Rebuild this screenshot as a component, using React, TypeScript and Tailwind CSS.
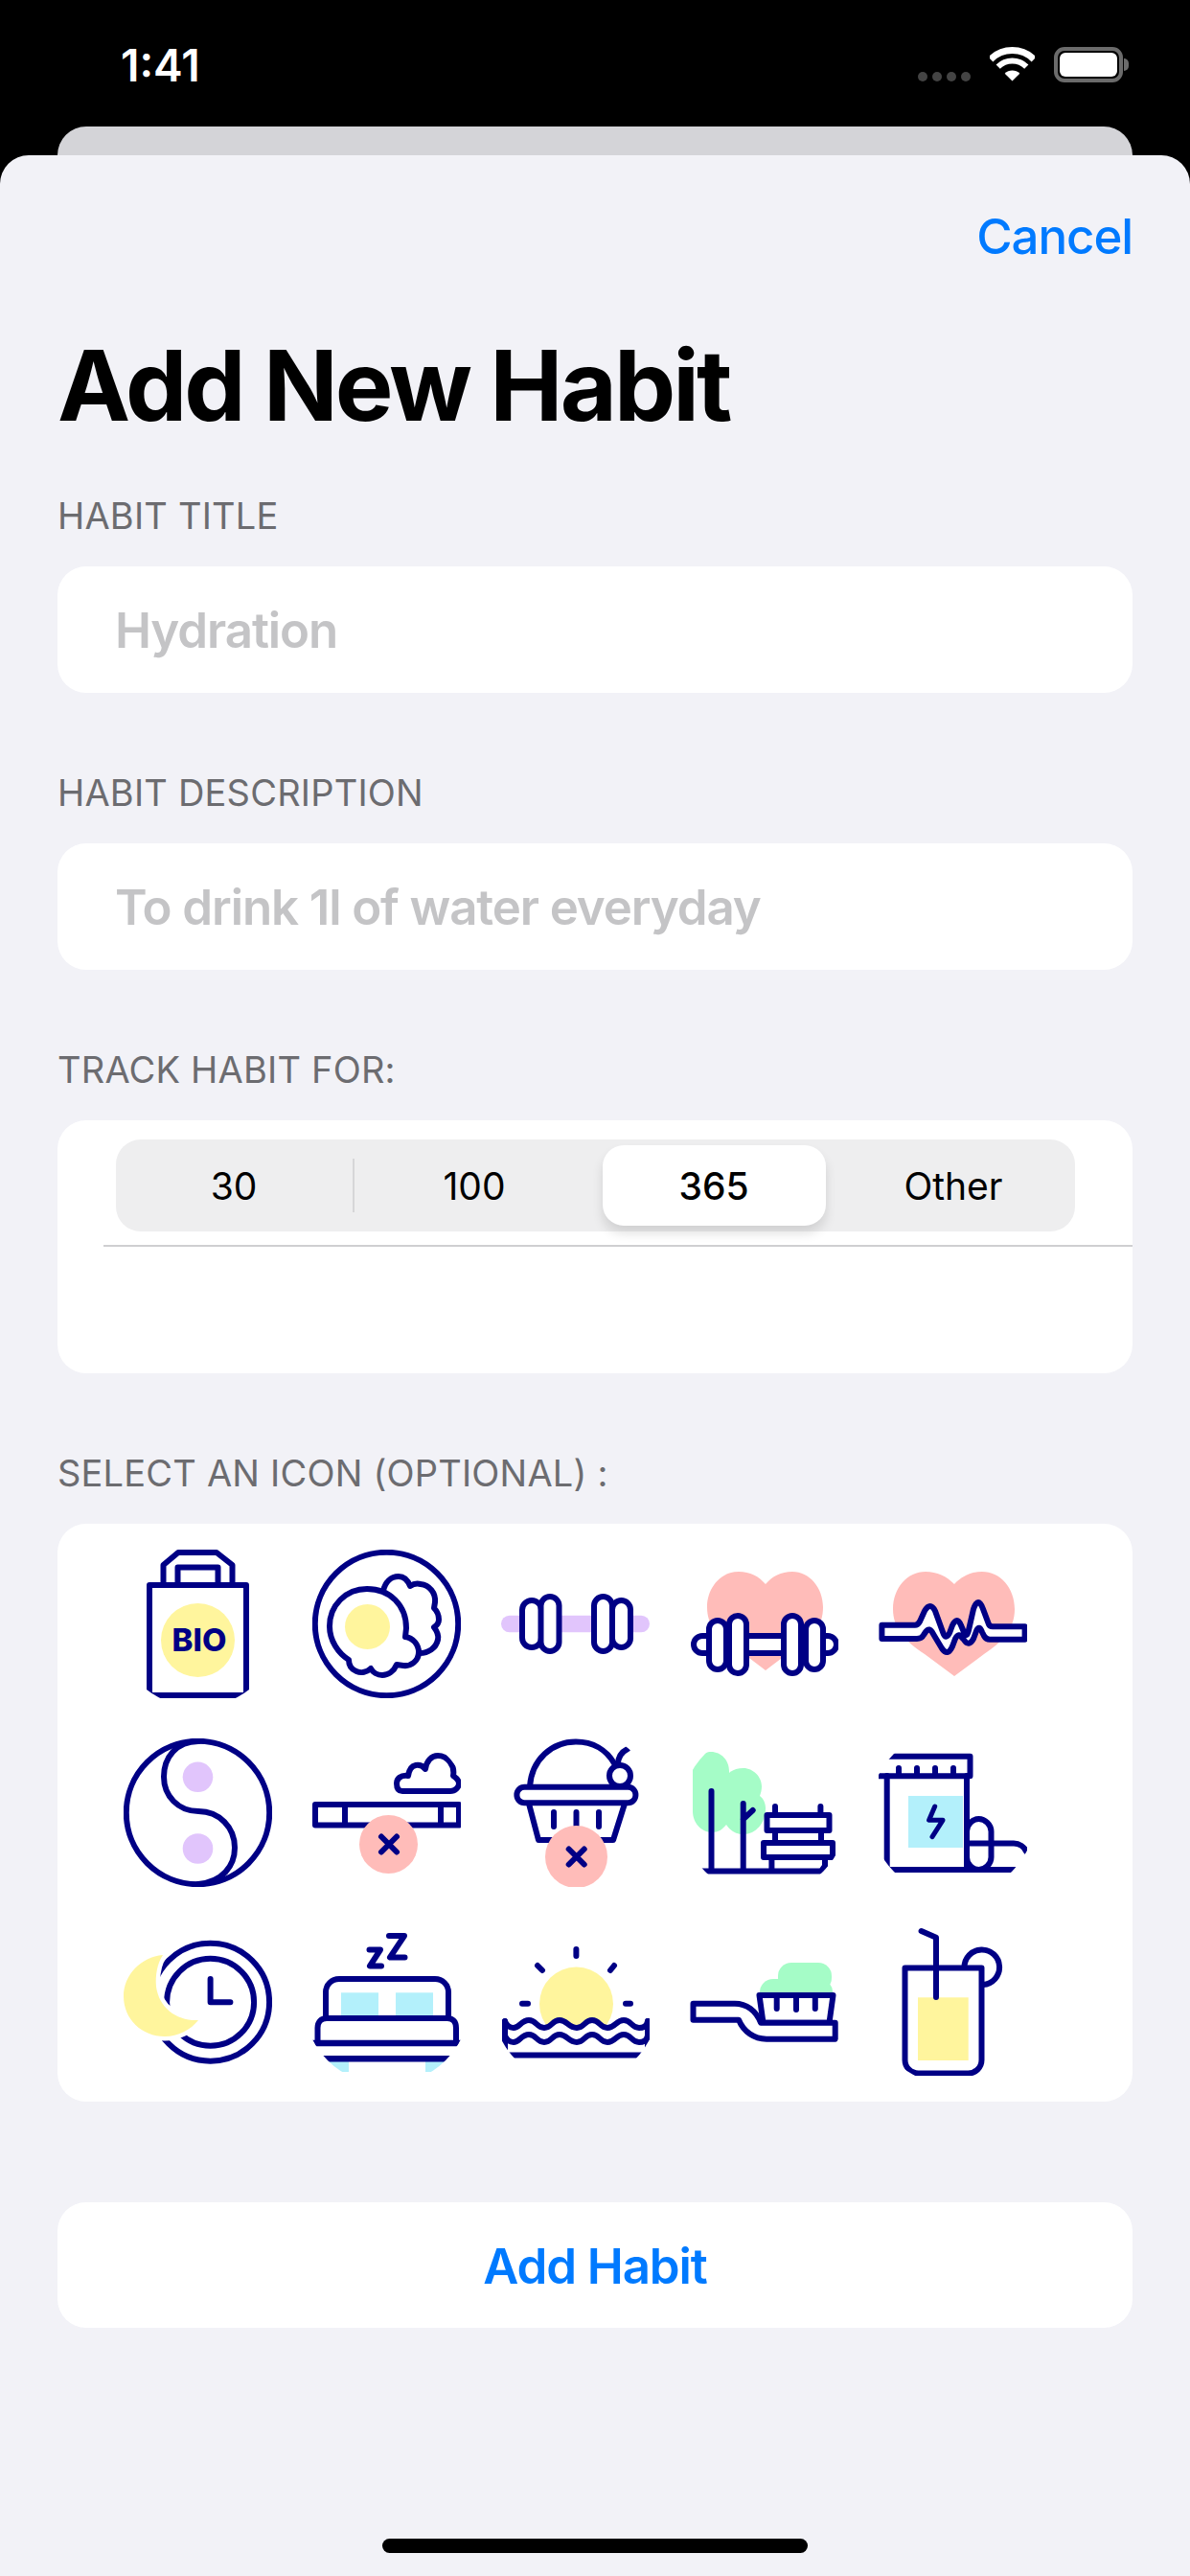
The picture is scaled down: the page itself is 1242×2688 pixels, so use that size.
const NAVY = '#000085';
const YELLOW = '#fff59d';
const LILAC = '#e1c5fc';
const PINK = '#ffbcb9';
const GREEN = '#a5fcc7';
const CYAN = '#b3f0fb';

function Icon({ children }: { children: React.ReactNode }) {
  return (
    <svg
      viewBox="0 0 155 155"
      fill="none"
      stroke={NAVY}
      strokeWidth={6}
      strokeLinecap="round"
      strokeLinejoin="round"
      className="h-[155px] w-[155px] [clip-path:circle(87px)]"
    >
      {children}
    </svg>
  );
}

function Bag() {
  return (
    <Icon>
      <path d="M41.5 34V16L57 3H97L113.5 16V34" />
      <path d="M56.5 34V18.5H98.5V34" />
      <rect x={27} y={37} width={101} height={115} />
      <circle cx={77.5} cy={94.5} r={38.5} fill={YELLOW} stroke="none" />
      <text x={79} y={106} textAnchor="middle" fontFamily="Inter, sans-serif" fontWeight={800} fontSize={33} fill={NAVY} stroke="none">
        BIO
      </text>
    </Icon>
  );
}

function Plate() {
  return (
    <Icon>
      <circle cx={77.5} cy={77.5} r={74.7} />
      <g transform="translate(-1 0)">
        <path d="M75 43C77 34 83 28 91 28C97 28 101 33 103 38C106 36 110 35 114 36C123 37 130 45 129 55L128 61C131 64 133 69 133 73C133 76 131 79 128 81C131 85 133 90 132 94C130 103 122 108 113 108" />
        <path d="M58 41C82 41 99 58 99 82L98 91C106 92 112 99 112 107C112 116 104 122 96 121L89 120C86 127 80 131 74 131C69 131 64 128 62 124C58 128 52 129 47 127C42 125 39 121 39 115C28 108 19 95 19 80C19 58 36 41 58 41Z" />
        <circle cx={58.5} cy={80.5} r={23.5} fill={YELLOW} stroke="none" />
      </g>
    </Icon>
  );
}

function Dumbbell() {
  return (
    <Icon>
      <rect x={0} y={68.7} width={155} height={17.6} rx={8.8} fill={LILAC} stroke="none" />
      <rect x={22} y={53} width={20} height={49} rx={10} fill="#fff" />
      <rect x={41.5} y={49} width={19} height={57} rx={9.5} fill="#fff" />
      <rect x={97} y={49} width={19} height={57} rx={9.5} fill="#fff" />
      <rect x={116} y={53} width={19} height={49} rx={9.5} fill="#fff" />
    </Icon>
  );
}

function HeartDumbbell() {
  return (
    <Icon>
      <path
        d="M79 36C72 28 63 23 51 23C32 23 18 40 18 60C18 80 30 92 50 104L79 126L108 104C128 92 139 80 139 60C139 40 125 23 107 23C95 23 86 28 79 36Z"
        fill={PINK}
        stroke="none"
      />
      <rect x={58} y={90} width={42} height={18} fill="#fff" />
      <path d="M20 90H13A9 9 0 0 0 13 108H20" fill="#fff" />
      <path d="M138 90H144A9 9 0 0 1 144 108H138" fill="#fff" />
      <rect x={20} y={74} width={18} height={51} rx={9} fill="#fff" />
      <rect x={121} y={74} width={18} height={51} rx={9} fill="#fff" />
      <rect x={41} y={69} width={18} height={60} rx={9} fill="#fff" />
      <rect x={98} y={69} width={18} height={60} rx={9} fill="#fff" />
    </Icon>
  );
}

function HeartPulse() {
  return (
    <Icon>
      <path
        d="M79 36C71 28 61 23 49 23C30 23 15 40 15 62C15 82 28 96 48 109L79 132L110 109C130 96 142 82 142 62C142 40 127 23 108 23C96 23 87 28 79 36Z"
        fill={PINK}
        stroke="none"
      />
      <path
        d="M3.4 78.7H38Q41 78.7 43 75L48 64Q54 54 59 64L67 86Q70 95 74 87L77 79Q82 69 86 79L89 86Q92 93 94 84L99 62Q104 48 109 62L115 78Q116 80.3 119 80.3H152.6V93.7H116Q112 93.7 110 90L108 86Q105 78 102 85L99 93Q94 102 89 94L87 92Q84 86 80 93L77 101Q72 112 66 103L57 88Q53 80 49 86L47 89Q45 93 40 93H3.4Z"
        fill="#fff"
      />
    </Icon>
  );
}

function YinYang() {
  return (
    <Icon>
      <circle cx={77.5} cy={77.5} r={74.7} />
      <path d="M78 3C55 3 42 20 42 40C42 60 57 76 78 76C100 76 116 93 116 114C116 133 103 150 78 152" />
      <circle cx={77.5} cy={40.3} r={15.8} fill={LILAC} stroke="none" />
      <circle cx={77.5} cy={115} r={15.8} fill={LILAC} stroke="none" />
    </Icon>
  );
}

function NoSmoke() {
  return (
    <Icon>
      <path d="M94 55H144C149 55 153 51 153 47C153 44 150 41 147 39C149 28 141 18 131 18C124 18 119 24 118 32C113 26 102 25 100 39C92 38 88 42 88 47C88 52 90 55 94 55Z" />
      <rect x={3} y={69} width={150} height={21.5} />
      <path d="M34 69V90M134 69V90" />
      <circle cx={79.5} cy={110.5} r={30.5} fill={PINK} stroke="none" />
      <path d="M72 102.5L88 118.5M88 102.5L72 118.5" />
    </Icon>
  );
}

function NoCake() {
  return (
    <Icon>
      <path d="M30 50C32 22 53 3.5 78 3.5C96 3.5 110 12 118 26" />
      <path d="M122 27C122 19 126 14 132 11" />
      <circle cx={124} cy={39} r={11} fill="#fff" />
      <rect x={16.4} y={50.7} width={124} height={16.5} rx={8} fill="#fff" />
      <path d="M29 68L39 106H117L129 68" />
      <path d="M55 77V92M78.5 77V92M102 77V92" />
      <circle cx={78.5} cy={123.5} r={32.5} fill={PINK} stroke="none" />
      <path d="M70.7 115.5L86.7 131.5M86.7 115.5L70.7 131.5" />
    </Icon>
  );
}

function Park() {
  return (
    <Icon>
      <path
        d="M22 14C33 14 41 23 41 34V36C44 33 50 31 56 31C66 31 75 40 75 50C75 54 74 57 73 60C77 63 79 68 79 73C79 88 69 100 56 100C48 100 42 96 38 90C34 95 30 98 23 98C12 98 3 88 3 76V33C3 23 12 14 22 14Z"
        fill={GREEN}
        stroke="none"
      />
      <path d="M22.5 55V138M55.7 68V138M65.7 75L55.7 84.3" />
      <path d="M0 138.5H137L141 133V126M85.4 126V138M89 71V80M136.4 71V80M89 97V109M137 97V109" />
      <rect x={80.5} y={80} width={65} height={16} fill="#fff" />
      <rect x={77} y={109} width={72} height={15} fill="#fff" />
    </Icon>
  );
}

function Pills() {
  return (
    <Icon>
      <rect x={31} y={60} width={57} height={54} fill={CYAN} stroke="none" />
      <path d="M0 39.3H95.5V18.7H0" />
      <path d="M21 31V39M40 31V39M59 31V39M78 31V39" />
      <path d="M8.7 39V137H92V39" />
      <path d="M58.7 71L52.6 85.3H67L56 102.7" strokeWidth={5} />
      <path d="M92 109.5H141C147 109.5 152 113 154 118M92 137H142" />
      <path d="M92 97C92 90 98 84 104.5 84C111 84 117.5 90 117.5 97V124C117.5 131 111 137 104.5 137C98 137 92 131 92 124" />
    </Icon>
  );
}

function ClockMoon() {
  const moon = 'M41 29C18 31 0 50 0 72C0 96 19 114 43 114C57 114 70 107 78 97C55 98 37 84 34 62C33 50 35 38 41 29Z';
  return (
    <Icon>
      <circle cx={90.6} cy={78.2} r={61.5} />
      <circle cx={90.6} cy={78.3} r={45.5} />
      <path d="M90.6 54V78.3H111.4" />
      <path d={moon} fill="#fff" stroke="#fff" strokeWidth={9} />
      <path d={moon} fill={YELLOW} stroke="none" />
    </Icon>
  );
}

function Bed() {
  return (
    <Icon>
      <rect x={0} y={140} width={38} height={11} fill={CYAN} stroke="none" />
      <rect x={118} y={140} width={37} height={11} fill={CYAN} stroke="none" />
      <rect x={30} y={68.3} width={39} height={24} fill={CYAN} stroke="none" />
      <rect x={87} y={68.3} width={39} height={24} fill={CYAN} stroke="none" />
      <path d="M80 9H96L81 31.5H96.5M59.5 23.5H71L60 40.5H72" />
      <path d="M14 93V68C14 60 20 54 28 54H128C136 54 142 60 142 68V93" />
      <path d="M5.5 121V105C5.5 99 9 95 15 95H141C147 95 150 99 150 105V121" />
      <path d="M0 121H155" strokeWidth={6.4} strokeLinecap="butt" />
      <path d="M0 137.3H155" strokeWidth={6.4} strokeLinecap="butt" />
    </Icon>
  );
}

function Sunrise() {
  const wave =
    'M4 98C6 103 10 105 13 105C19 105 21 97 29 97C37 97 37 105 45 105C53 105 53 97 61 97C69 97 70 105 79 105C87 105 87 97 95 97C103 97 103 105 111 105C119 105 120 97 128 97C136 97 136 105 144 105C149 105 152 103 153 98';
  return (
    <Icon>
      <circle cx={78.5} cy={80} r={38.5} fill={YELLOW} stroke="none" />
      <path d={`${wave}V130H4Z`} fill="#fff" stroke="none" />
      <path d="M78.4 23V30M38 40L43 45M118 40L114 45M22 79.7H28M130 79.7H135" />
      <path d={wave} />
      <path d={wave} transform="translate(0 15)" />
      <path d="M4 98V130M153 98V130" />
      <path d="M0 133.5H155" strokeWidth={6} strokeLinecap="butt" />
    </Icon>
  );
}

function Toothbrush() {
  return (
    <Icon>
      <rect x={92} y={37} width={56} height={30} rx={14} fill={GREEN} stroke="none" />
      <rect x={73} y={54} width={76} height={30} rx={14} fill={GREEN} stroke="none" />
      <path d="M72.5 71H149.5L145.5 99.7H76.5Z" fill="#fff" />
      <path d="M90.7 71V85M111 71V86M130.8 71V85" />
      <path d="M3.5 79.7H47C59 79.7 69 87 74 99.7H151.7V116.7H80C67 116.7 56 109 51 96.7H3.5Z" fill="#fff" />
    </Icon>
  );
}

function Juice() {
  return (
    <Icon>
      <path d="M89.5 42A18.3 18.3 0 1 1 109 60" />
      <rect x={41} y={73.3} width={52.7} height={65.7} fill={YELLOW} stroke="none" />
      <path d="M27.5 42.5H107.5V138.5C107.5 146.5 101 152.5 93.5 152.5H41.5C34 152.5 27.5 146.5 27.5 138.5Z" />
      <path d="M60 73V10.7L44.6 4" />
    </Icon>
  );
}

const icons = [
  Bag, Plate, Dumbbell, HeartDumbbell, HeartPulse,
  YinYang, NoSmoke, NoCake, Park, Pills,
  ClockMoon, Bed, Sunrise, Toothbrush, Juice,
];

function Label({ children, className = '' }: { children: React.ReactNode; className?: string }) {
  return (
    <div className={`flex h-[46px] items-center text-[38px] tracking-[0.2px] text-[#6c6c70] ${className}`}>
      {children}
    </div>
  );
}

function Field({ children }: { children: React.ReactNode }) {
  return (
    <div className="mt-[30px] flex h-[132px] items-center rounded-[30px] bg-white pl-[60px] pt-[2px] text-[51px] font-semibold tracking-[-1.1px] text-[#c4c4c6]">
      {children}
    </div>
  );
}

function StatusBar() {
  return (
    <div className="flex h-[132px] shrink-0 items-start justify-between pl-[126px] pr-[64px] pt-[40px] text-white">
      <span className="text-[46px] leading-[56px] font-semibold">1:41</span>
      <div className="flex items-start pt-[9px]">
        <div className="mt-[26px] flex gap-[5px]">
          {[0, 1, 2, 3].map((i) => (
            <div key={i} className="h-[10px] w-[10px] rounded-full bg-[#444444]" />
          ))}
        </div>
        <svg viewBox="0 0 47 36" className="ml-[20px] h-[36px] w-[47px]" fill="none" stroke="#fff">
          <path d="M0.9 12.9A32 32 0 0 1 46.1 12.9" strokeWidth={7} />
          <path d="M8.7 20.7A21 21 0 0 1 38.3 20.7" strokeWidth={6} />
          <path d="M23.5 35.5L15.7 27.7A11 11 0 0 1 31.3 27.7Z" fill="#fff" stroke="none" />
        </svg>
        <div className="ml-[20px] h-[37px] w-[72px] rounded-[11px] border-[4px] border-[#6b6b6b] p-[2px]">
          <div className="h-full w-full rounded-[6px] bg-white" />
        </div>
        <div className="ml-[1px] mt-[12px] h-[13px] w-[5px] rounded-r-full bg-[#6b6b6b]" />
      </div>
    </div>
  );
}

export default function App() {
  return (
    <div className="flex h-[2688px] w-[1242px] flex-col overflow-hidden bg-black font-['Inter',sans-serif]">
      <StatusBar />
      <div className="mx-[60px] h-[30px] shrink-0 rounded-t-[30px] bg-[#d4d4d8]" />
      <div className="flex flex-1 flex-col rounded-t-[30px] bg-[#f2f2f7] px-[60px] pt-[55px]">
        <div className="flex h-[60px] items-center justify-end text-[51px] font-medium tracking-[-1.1px] text-[#007aff]">Cancel</div>

        <h1 className="mt-[65px] flex h-[120px] items-center text-[102px] font-bold tracking-[-2.9px] text-black">
          Add New Habit
        </h1>

        <Label className="mt-[53px]">HABIT TITLE</Label>
        <Field>Hydration</Field>

        <Label className="mt-[81px]">HABIT DESCRIPTION</Label>
        <Field>To drink 1l of water everyday</Field>

        <Label className="mt-[81px]">TRACK HABIT FOR:</Label>
        <div className="mt-[30px] h-[264px] rounded-[30px] bg-white pt-[20px]">
          <div className="ml-[61px] mr-[60px] flex h-[96px] items-center rounded-[26px] bg-[#eeeeef] text-[39px] text-black">
            <div className="-ml-[1px] flex w-[250px] items-center justify-center border-r-2 border-[#d6d6d8] pt-[2px] leading-[54px]">30</div>
            <div className="flex w-[250px] items-center justify-center pt-[2px]">100</div>
            <div className="flex w-[250px] items-center justify-center">
              <div className="flex h-[84px] w-[233px] items-center justify-center rounded-[22px] bg-white pt-[2px] font-medium shadow-[0_8px_12px_rgba(0,0,0,0.12)]">
                365
              </div>
            </div>
            <div className="flex w-[250px] items-center justify-center pt-[2px]">Other</div>
          </div>
          <div className="ml-[48px] mt-[14px] h-[2px] bg-[#cfcfd1]" />
        </div>

        <Label className="mt-[81px]">SELECT AN ICON (OPTIONAL) :</Label>
        <div className="mt-[30px] grid grid-cols-[repeat(5,155px)] gap-[42px] rounded-[30px] bg-white pb-[27px] pl-[69px] pt-[27px]">
          {icons.map((IconItem, i) => (
            <IconItem key={i} />
          ))}
        </div>

        <div className="mt-[105px] flex h-[131px] items-center justify-center rounded-[30px] bg-white pt-[3px] text-[51px] font-semibold tracking-[-1.1px] text-[#007aff]">
          Add Habit
        </div>

        <div className="mb-[24px] mt-auto h-[15px] w-[444px] self-center rounded-full bg-black" />
      </div>
    </div>
  );
}
